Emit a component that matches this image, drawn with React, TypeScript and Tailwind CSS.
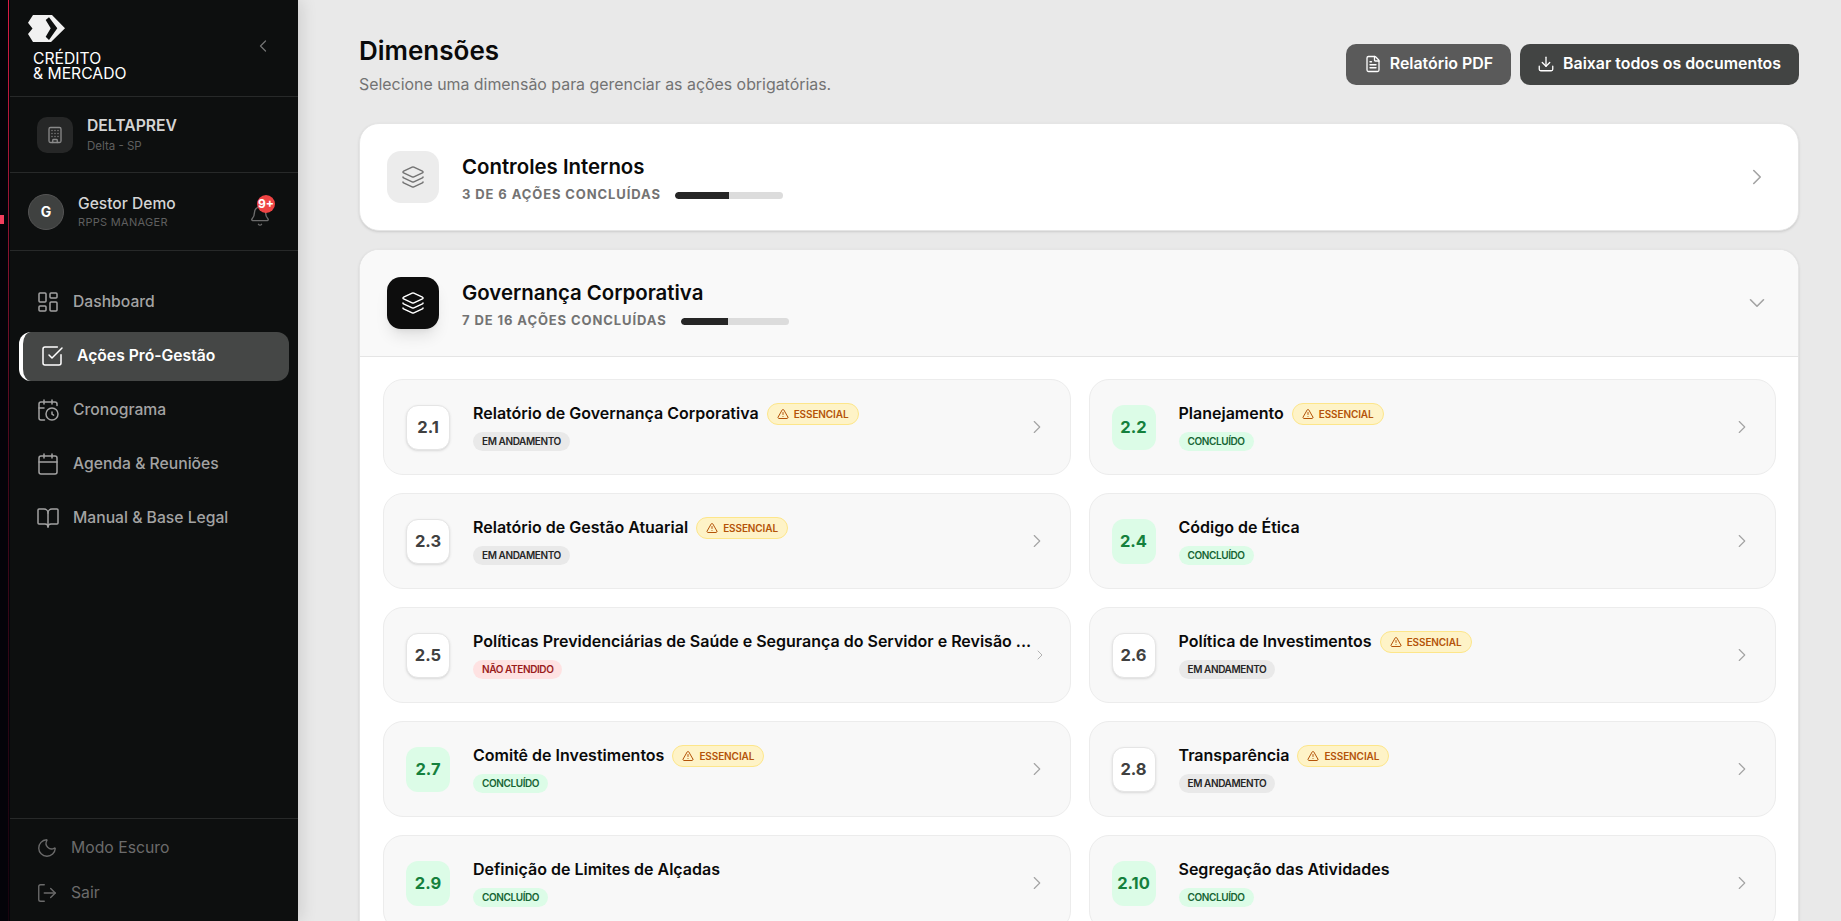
import {
  Bell,
  BookOpen,
  Building,
  Calendar,
  CalendarClock,
  ChevronDown,
  ChevronLeft,
  ChevronRight,
  Download,
  FileText,
  Layers,
  LayoutDashboard,
  LogOut,
  Moon,
  SquareCheckBig,
  TriangleAlert,
} from "lucide-react";

type Status = "andamento" | "concluido" | "naoatendido";

const actions: { num: string; title: string; essential?: boolean; status: Status; small?: boolean }[] = [
  { num: "2.1", title: "Relatório de Governança Corporativa", essential: true, status: "andamento" },
  { num: "2.2", title: "Planejamento", essential: true, status: "concluido" },
  { num: "2.3", title: "Relatório de Gestão Atuarial", essential: true, status: "andamento" },
  { num: "2.4", title: "Código de Ética", status: "concluido" },
  {
    num: "2.5",
    title: "Políticas Previdenciárias de Saúde e Segurança do Servidor e Revisão ...",
    status: "naoatendido",
    small: true,
  },
  { num: "2.6", title: "Política de Investimentos", essential: true, status: "andamento" },
  { num: "2.7", title: "Comitê de Investimentos", essential: true, status: "concluido" },
  { num: "2.8", title: "Transparência", essential: true, status: "andamento" },
  { num: "2.9", title: "Definição de Limites de Alçadas", status: "concluido" },
  { num: "2.10", title: "Segregação das Atividades", status: "concluido" },
];

const nav = [
  { label: "Dashboard", icon: LayoutDashboard },
  { label: "Ações Pró-Gestão", icon: SquareCheckBig, active: true },
  { label: "Cronograma", icon: CalendarClock },
  { label: "Agenda & Reuniões", icon: Calendar },
  { label: "Manual & Base Legal", icon: BookOpen },
];

function StatusPill({ status }: { status: Status }) {
  if (status === "concluido") {
    return (
      <span className="h-[19px] px-[9px] rounded-full bg-[#dcfce7] text-[#166534] text-[10px] font-semibold tracking-[-0.4px] leading-[19px]">
        CONCLUÍDO
      </span>
    );
  }
  if (status === "naoatendido") {
    return (
      <span className="h-[19px] px-[9px] rounded-full bg-[#fee2e2] text-[#991b1b] text-[10px] font-semibold tracking-[-0.4px] leading-[19px]">
        NÃO ATENDIDO
      </span>
    );
  }
  return (
    <span className="h-[19px] px-[9px] rounded-full bg-[#e9e9e9] text-[#262626] text-[10px] font-semibold tracking-[-0.4px] leading-[19px]">
      EM ANDAMENTO
    </span>
  );
}

function ActionCard({ item }: { item: (typeof actions)[number] }) {
  const done = item.status === "concluido";
  return (
    <div className="h-[96px] rounded-[20px] border border-[#ececec] bg-[#f8f8f8] pl-[22px] pr-[22px] flex items-center">
      {done ? (
        <div className="w-[44px] h-[45px] shrink-0 rounded-[12px] bg-[#dcfce7] text-[#15803d] text-[16.5px] font-bold flex items-center justify-center">
          {item.num}
        </div>
      ) : (
        <div className="w-[44px] h-[45px] shrink-0 rounded-[12px] bg-white border border-[#e5e5e5] shadow-sm text-[#404040] text-[16.5px] font-bold flex items-center justify-center">
          {item.num}
        </div>
      )}
      <div className="flex-1 min-w-0 ml-[23px] flex flex-col items-start gap-[7px]">
        <div className="h-[22px] flex items-center gap-[8px]">
          <span className="-mt-[2px] text-[16px] font-semibold text-[#0a0a0a] whitespace-nowrap">
            {item.title}
          </span>
          {item.essential && (
            <span className="h-[22px] rounded-full bg-[#fef3c7] border border-[#fde68a] text-[#b45309] text-[10px] tracking-[-0.1px] font-semibold px-[9px] flex items-center gap-[5px]">
              <TriangleAlert size={12} strokeWidth={2} />
              ESSENCIAL
            </span>
          )}
        </div>
        <StatusPill status={item.status} />
      </div>
      <ChevronRight
        size={item.small ? 16 : 22}
        strokeWidth={1.25}
        className="shrink-0 text-[#a3a3a3]"
      />
    </div>
  );
}

function Logo() {
  return (
    <svg width="38" height="28" viewBox="0 0 38 28">
      <path
        d="M5 0H24L37 13.3L23 27H5L0 19L4.5 13.5L0 7.7Z"
        fill="#f1f1f1"
      />
      <path d="M17.7 5L21 2.3L29.3 13.3L21 25L17.7 21.7L22.7 13.3Z" fill="#0d0f0f" />
    </svg>
  );
}

function Sidebar() {
  return (
    <aside className="relative z-10 w-[288px] shrink-0 h-full bg-[#0d0f0f] flex flex-col shadow-[3px_0_16px_rgba(0,0,0,0.12)]">
      <div className="h-[97px] shrink-0 border-b border-[#272929] pl-[18px] pr-[25px] pt-[15px] flex items-start justify-between">
        <div>
          <Logo />
          <div className="mt-[8px] ml-[5px] text-[15.7px] leading-[15px] text-white font-normal">
            CRÉDITO
            <br />& MERCADO
          </div>
        </div>
        <ChevronLeft size={20} strokeWidth={1.5} className="mt-[21px] text-[#737373]" />
      </div>

      <div className="h-[76px] shrink-0 border-b border-[#272929] pl-[27px] flex items-center gap-[14px]">
        <div className="w-[36px] h-[36px] rounded-[10px] bg-[#262727] flex items-center justify-center">
          <Building size={18} strokeWidth={1.75} className="text-[#8a8a8a]" />
        </div>
        <div className="-mt-[1px]">
          <div className="text-[15.7px] leading-[20px] font-semibold text-[#d4d4d4]">DELTAPREV</div>
          <div className="text-[11.5px] leading-[14px] mt-[3px] text-[#5f5f5f]">Delta - SP</div>
        </div>
      </div>

      <div className="h-[78px] shrink-0 border-b border-[#272929] pl-[18px] pr-[27px] flex items-center">
        <div className="w-[36px] h-[36px] rounded-full bg-[#3f4140] border border-[#555] text-white text-[14px] font-bold flex items-center justify-center">
          G
        </div>
        <div className="ml-[14px] flex-1 -mt-[1px]">
          <div className="text-[15.6px] leading-[20px] font-medium text-[#d4d4d4]">Gestor Demo</div>
          <div className="mt-[1px] text-[11px] leading-[14px] tracking-[0.3px] text-[#5f5f5f]">RPPS MANAGER</div>
        </div>
        <div className="relative mt-[8px]">
          <Bell size={22} strokeWidth={1.5} className="text-[#6b6b6b]" />
          <span className="absolute -top-[10px] left-[8px] w-[18px] h-[18px] rounded-full bg-[#ef4444] text-white text-[12px] font-bold flex items-center justify-center">
            9+
          </span>
        </div>
      </div>

      <nav className="flex-1 pt-[27px] px-[9px] flex flex-col gap-[5px]">
        {nav.map((n) => {
          const Icon = n.icon;
          return n.active ? (
            <div
              key={n.label}
              className="h-[49px] rounded-[12px] bg-[#454746] border-l-[4px] border-white pl-[17px] pb-[1px] flex items-center gap-[13px] text-white text-[15.7px] font-semibold"
            >
              <Icon size={24} strokeWidth={1.5} />
              {n.label}
            </div>
          ) : (
            <div
              key={n.label}
              className="h-[49px] pl-[17px] pb-[1px] flex items-center gap-[13px] text-[#a3a3a3] text-[15.7px] font-medium"
            >
              <Icon size={24} strokeWidth={1.5} />
              {n.label}
            </div>
          );
        })}
      </nav>

      <div className="shrink-0 h-[103px] border-t border-[#272929] pt-[6px] pl-[26px] text-[#6b6b6b] text-[15.75px]">
        <div className="h-[45px] flex items-center gap-[13px]">
          <Moon size={22} strokeWidth={1.5} />
          Modo Escuro
        </div>
        <div className="h-[45px] flex items-center gap-[13px]">
          <LogOut size={22} strokeWidth={1.5} />
          Sair
        </div>
      </div>
    </aside>
  );
}

export default function App() {
  return (
    <div className="h-screen w-full overflow-hidden flex bg-[#e9e9e9] font-['Inter',sans-serif]">
      {/* rail to the left of the sidebar */}
      <div className="relative w-[10px] shrink-0 h-full bg-[#05040a]">
        <div className="absolute right-[1px] top-0 bottom-0 w-[1px] bg-gradient-to-b from-[#e11d48] via-[#4c0a1e] to-[#1a0510]" />
        <div className="absolute left-0 top-[215px] w-[4px] h-[9px] bg-[#f43f5e]" />
      </div>

      <Sidebar />

      <main className="flex-1 min-w-0 h-full overflow-hidden pl-[61px] pr-[42px] pt-[33px]">
        <div className="flex items-start justify-between">
          <div>
            <h1 className="text-[26px] leading-[36px] font-semibold text-[#0a0a0a]">Dimensões</h1>
            <p className="mt-[5px] text-[15.9px] leading-[22px] text-[#737373]">
              Selecione uma dimensão para gerenciar as ações obrigatórias.
            </p>
          </div>
          <div className="mt-[11px] flex gap-[9px]">
            <button className="h-[41px] pl-[18px] pr-[18px] pb-[2px] rounded-[10px] bg-[#5a5a5a] text-white text-[15.9px] font-semibold flex items-center gap-[8px]">
              <FileText size={18} strokeWidth={1.75} />
              Relatório PDF
            </button>
            <button className="h-[41px] pl-[17px] pr-[18px] pb-[2px] rounded-[10px] bg-[#424443] text-white text-[15.9px] font-semibold flex items-center gap-[8px]">
              <Download size={18} strokeWidth={1.75} />
              Baixar todos os documentos
            </button>
          </div>
        </div>

        <div className="mt-[27px] flex flex-col gap-[18px]">
          <div className="h-[108px] rounded-[20px] border border-[#e5e5e5] bg-white shadow-sm pl-[27px] pr-[28px] flex items-center">
            <div className="w-[52px] h-[52px] rounded-[14px] bg-[#ececec] text-[#737373] flex items-center justify-center">
              <Layers size={24} strokeWidth={1.5} />
            </div>
            <div className="ml-[23px] flex-1 pt-[4px]">
              <div className="text-[20.4px] leading-[28px] font-semibold text-[#0a0a0a]">Controles Internos</div>
              <div className="mt-[4px] flex items-center gap-[14px]">
                <span className="text-[13px] font-bold tracking-[0.9px] text-[#737373]">3 DE 6 AÇÕES CONCLUÍDAS</span>
                <div className="w-[108px] h-[7px] rounded-full bg-[#dcdcdc] overflow-hidden">
                  <div className="h-full w-[50%] bg-[#262626] rounded-l-full" />
                </div>
              </div>
            </div>
            <ChevronRight size={26} strokeWidth={1.5} className="text-[#a3a3a3]" />
          </div>

          <div className="rounded-[20px] border border-[#e5e5e5] bg-white shadow-sm overflow-hidden">
            <div className="h-[107px] bg-[#f9f9f9] border-b border-[#e5e5e5] pl-[27px] pr-[28px] flex items-center">
              <div className="w-[52px] h-[52px] rounded-[14px] bg-[#0d0d0d] text-white shadow-lg flex items-center justify-center">
                <Layers size={24} strokeWidth={1.5} />
              </div>
              <div className="ml-[23px] flex-1 pt-[4px]">
                <div className="text-[20.4px] leading-[28px] font-semibold text-[#0a0a0a]">Governança Corporativa</div>
                <div className="mt-[4px] flex items-center gap-[14px]">
                  <span className="text-[13px] font-bold tracking-[0.9px] text-[#737373]">7 DE 16 AÇÕES CONCLUÍDAS</span>
                  <div className="w-[108px] h-[7px] rounded-full bg-[#dcdcdc] overflow-hidden">
                    <div className="h-full w-[43.75%] bg-[#262626] rounded-l-full" />
                  </div>
                </div>
              </div>
              <ChevronDown size={26} strokeWidth={1.5} className="text-[#a3a3a3]" />
            </div>
            <div className="pl-[23px] pr-[22px] pt-[22px] pb-[23px] grid grid-cols-2 gap-[18px]">
              {actions.map((a) => (
                <ActionCard key={a.num} item={a} />
              ))}
            </div>
          </div>
        </div>
      </main>
    </div>
  );
}
